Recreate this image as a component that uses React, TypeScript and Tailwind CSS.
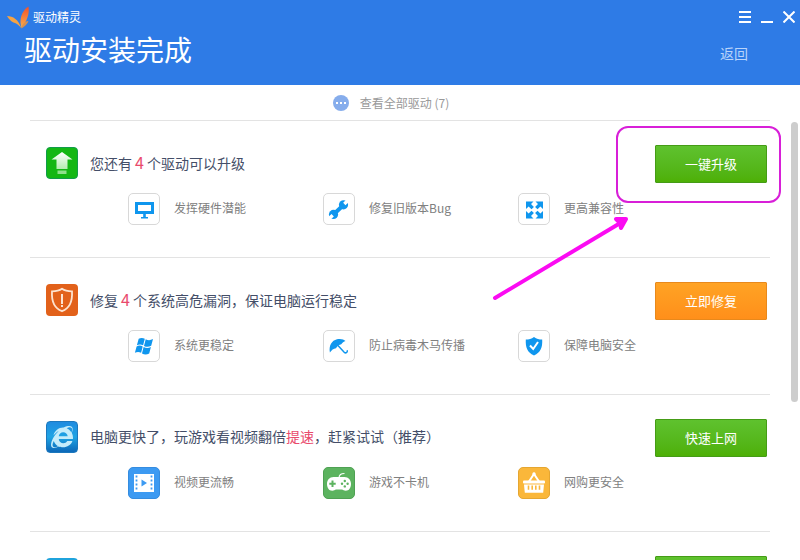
import type { ReactNode } from "react";
import { FaInternetExplorer } from "react-icons/fa";

type Feature = { label: string; icon: ReactNode; tile: string };

type Task = {
  id: string;
  icon: ReactNode;
  title: ReactNode;
  action: string;
  color: "green" | "orange";
  features: Feature[];
};

const OUTLINED = "border border-[#d8d8d8] bg-white text-[#0f96ee]";

const BUTTON_COLORS = {
  green: "border-[#459c16] bg-linear-to-b from-[#5fc22e] to-[#4eb005]",
  orange: "border-[#e8891c] bg-linear-to-b from-[#ffa324] to-[#ff8f1a]",
};

function Glyph({ children }: { children: ReactNode }) {
  return (
    <svg viewBox="0 0 32 32" className="size-8 shrink-0" fill="currentColor" aria-hidden="true">
      {children}
    </svg>
  );
}

function Logo() {
  return (
    <svg viewBox="0 0 24 24" className="size-6" aria-hidden="true">
      <defs>
        <linearGradient id="leaf" x1="0" y1="0" x2="0" y2="1">
          <stop offset="0" stopColor="#f2502a" />
          <stop offset="1" stopColor="#f9b04a" />
        </linearGradient>
      </defs>
      <path d="M21.500 1.500C16.500 4.500 13 11 13.500 18L14.500 23C19.500 17 22.800 9 21.500 1.500Z" fill="url(#leaf)" />
      <path d="M0 11C6 11 11.500 14.500 14.500 23.500C12 20 9.500 18.500 6.500 17.500C4 16.500 2 14 0 11Z" fill="#f6a343" />
      <path d="M14.500 23.500C15 19 17.500 16.500 21.500 16C20.500 19 18 21 14.500 23.500Z" fill="#d99050" />
    </svg>
  );
}

function UpgradeIcon() {
  return (
    <Glyph>
      <defs>
        <linearGradient id="up" x1="0" y1="0" x2="0" y2="1">
          <stop offset="0" stopColor="#fff" />
          <stop offset="1" stopColor="#b4ecb0" />
        </linearGradient>
      </defs>
      <rect x="0.5" y="0.5" width="31" height="31" rx="3.5" fill="#14b714" stroke="#119c4a" />
      <path d="M16 5L26.5 12.5H21.5V22H10.5V12.5H5.5Z" fill="url(#up)" />
      <rect x="11.5" y="23.5" width="9" height="3.5" fill="#8fe08c" />
    </Glyph>
  );
}

function AlertIcon() {
  return (
    <Glyph>
      <rect width="32" height="32" rx="4" fill="#e2611a" />
      <path
        d="M16 4.800C13 7 9.500 7.400 6 7.400C5.400 17 7.500 24 16 27.200C24.500 24 26.600 17 26 7.400C22.500 7.400 19 7 16 4.800Z"
        fill="none"
        stroke="#fde3cf"
        strokeWidth="1.8"
      />
      <rect x="15" y="10" width="2" height="10" fill="#fde3cf" />
      <rect x="15" y="21" width="2" height="2" fill="#fde3cf" />
    </Glyph>
  );
}

function BrowserIcon() {
  return (
    <span className="flex size-8 shrink-0 items-center justify-center rounded-sm border border-[#1c78bd] bg-linear-to-b from-[#1f8be0] via-[#1fa4e4] to-[#0d68b8]">
      <FaInternetExplorer className="size-[22px] text-[#c4ecfb]" aria-hidden="true" />
    </span>
  );
}

const monitor = (
  <Glyph>
    <path fillRule="evenodd" d="M7 9h19v12H7zM10 12v6h13v-6z" />
    <path d="M15.200 21h2.600v3h2.200v1.500h-7V24h2.200z" />
  </Glyph>
);

const wrench = (
  <Glyph>
    <path d="M11 21L20.500 12" stroke="currentColor" strokeWidth="4" />
    <circle cx="20.500" cy="11.800" r="4.600" />
    <circle cx="10.500" cy="21.400" r="4.600" />
    <path d="M21.300 11L27 5.600M9.700 22.200L4 27.600" stroke="#fff" strokeWidth="3.400" />
  </Glyph>
);

const corner = "M8 8.500h7.500l-2.500 2.500 2.900 2.900-2.400 2.400-2.900-2.900L8 16z";
const expand = (
  <Glyph>
    <path d={corner} />
    <path d={corner} transform="matrix(-1 0 0 1 33 0)" />
    <path d={corner} transform="matrix(1 0 0 -1 0 34)" />
    <path d={corner} transform="matrix(-1 0 0 -1 33 34)" />
  </Glyph>
);

const windowsFlag = (
  <Glyph>
    <path d="M10.700 8.800c2-1.300 4.200-1.100 6.100-.1l-1.700 6.600c-2-1.100-4.200-1.100-6.200 0z" />
    <path d="M17.700 9.300c2.400 1.300 4.700 1.200 7.300-.2l-1.800 6.700c-2.400 1.300-4.900 1.400-7.200 .1z" />
    <path d="M8.600 16.400c2-1.100 4.200-1.100 6.100 0l-1.600 6.300c-2-1.100-4.200-1-6.200 0z" />
    <path d="M15.600 17c2.300 1.300 4.800 1.300 7.300 0l-1.700 6.400c-2.400 1.300-4.900 1.300-7.200 0z" />
  </Glyph>
);

const umbrella = (
  <Glyph>
    <path d="M6.900 22.500C5.600 15.500 8.800 10.400 14 9.200C17.500 8.400 20.800 9.200 22.500 11C20.800 11.600 19.200 12.700 18.300 14.300C16.300 14.600 14.200 16 13 18.200C10.600 18.600 8.400 20 6.900 22.500Z" />
    <path d="M14.500 15L21.200 22.200C22.600 23.600 24.800 22.600 24.200 20.200" fill="none" stroke="currentColor" strokeWidth="1.500" />
  </Glyph>
);

const shieldCheck = (
  <Glyph>
    <path d="M16 7C13.500 9 10.800 9.600 7.800 9.600C7.400 17.500 9.300 22.700 16 25.500C22.700 22.700 24.600 17.500 24.200 9.600C21.200 9.600 18.500 9 16 7Z" />
    <path d="M12 15.500L15.200 19L20 12" fill="none" stroke="#fff" strokeWidth="2" />
  </Glyph>
);

const film = (
  <Glyph>
    <rect x="6" y="7" width="20" height="18" fill="#fff" />
    <path d="M8.500 8.500V24M23.500 8.500V24" stroke="#3c9af2" strokeWidth="1.800" strokeDasharray="2 2" />
    <rect x="11" y="9" width="10" height="14" fill="#fff" />
    <path d="M13.500 12.500L19 16L13.500 19.500Z" fill="#3c9af2" />
  </Glyph>
);

const gamepad = (
  <Glyph>
    <path d="M16 11C16 7.500 18 6.500 21.500 6.500" fill="none" stroke="#fff" strokeWidth="1.200" />
    <path
      d="M10.500 10H21.500C25.500 10 28 13 28 16.800C28 21 26 23.800 22.800 23.800C20.800 23.800 20.300 22.500 18.800 22.500H13.200C11.700 22.500 11.200 23.800 9.200 23.800C6 23.800 4 21 4 16.800C4 13 6.500 10 10.500 10Z"
      fill="#fff"
    />
    <path d="M9.500 13.500V20M6.300 16.700H12.700" stroke="#5cb35f" strokeWidth="2" />
    <circle cx="21.800" cy="14" r="1.200" fill="#5cb35f" />
    <circle cx="21.800" cy="19.400" r="1.200" fill="#5cb35f" />
    <circle cx="19" cy="16.700" r="1.200" fill="#5cb35f" />
    <circle cx="24.600" cy="16.700" r="1.200" fill="#5cb35f" />
  </Glyph>
);

const basket = (
  <Glyph>
    <path d="M11 14.500L16 7L21 14.500" fill="none" stroke="#fff" strokeWidth="2" />
    <circle cx="16" cy="7" r="1.700" fill="#fff" />
    <rect x="5" y="13.500" width="22" height="3" rx="1" fill="#fff" />
    <path d="M6 17.500H26L25.200 25.800H6.800Z" fill="#fff" />
    <path d="M10.500 18.500V22.800M14.200 18.500V22.800M17.800 18.500V22.800M21.500 18.500V22.800" stroke="#fab73a" strokeWidth="1.600" />
  </Glyph>
);

const TASKS: Task[] = [
  {
    id: "upgrade",
    icon: <UpgradeIcon />,
    title: (
      <>
        您还有<Mark>4</Mark>个驱动可以升级
      </>
    ),
    action: "一键升级",
    color: "green",
    features: [
      { label: "发挥硬件潜能", icon: monitor, tile: OUTLINED },
      { label: "修复旧版本Bug", icon: wrench, tile: OUTLINED },
      { label: "更高兼容性", icon: expand, tile: OUTLINED },
    ],
  },
  {
    id: "repair",
    icon: <AlertIcon />,
    title: (
      <>
        修复<Mark>4</Mark>个系统高危漏洞，保证电脑运行稳定
      </>
    ),
    action: "立即修复",
    color: "orange",
    features: [
      { label: "系统更稳定", icon: windowsFlag, tile: OUTLINED },
      { label: "防止病毒木马传播", icon: umbrella, tile: OUTLINED },
      { label: "保障电脑安全", icon: shieldCheck, tile: OUTLINED },
    ],
  },
  {
    id: "browser",
    icon: <BrowserIcon />,
    title: (
      <>
        电脑更快了，玩游戏看视频翻倍<span className="text-[#e94a6c]">提速</span>，赶紧试试（推荐）
      </>
    ),
    action: "快速上网",
    color: "green",
    features: [
      { label: "视频更流畅", icon: film, tile: "border border-[#358cdf] bg-[#3c9af2]" },
      { label: "游戏不卡机", icon: gamepad, tile: "border border-[#4fa153] bg-[#5cb35f]" },
      { label: "网购更安全", icon: basket, tile: "border border-[#e5a631] bg-[#fab73a]" },
    ],
  },
  {
    id: "more",
    icon: <span className="size-8 shrink-0 rounded bg-[#1fa3dc]" />,
    title: null,
    action: "",
    color: "green",
    features: [],
  },
];

function Mark({ children }: { children: ReactNode }) {
  return <span className="mx-[3px] text-base leading-5 text-[#e94a6c]">{children}</span>;
}

function TaskRow({ task }: { task: Task }) {
  return (
    <li className="flex min-h-[137px] shrink-0 items-start border-t border-[#e3e3e3] pr-[3px] pl-4">
      <div className="min-w-0 flex-1 pt-[26px]">
        <div className="flex h-8 items-center gap-3">
          {task.icon}
          <h2 className="pb-0.5 text-sm leading-5 whitespace-nowrap text-[#444e68]">{task.title}</h2>
        </div>
        <ul className="mt-[14px] grid grid-cols-[195px_195px_auto] pl-[82px]">
          {task.features.map((f) => (
            <li key={f.label} className="flex items-center gap-[14px]">
              <span className={`flex size-8 shrink-0 items-center justify-center rounded-[5px] ${f.tile}`}>
                {f.icon}
              </span>
              <span className="pb-0.5 text-xs whitespace-nowrap text-[#808080]">{f.label}</span>
            </li>
          ))}
        </ul>
      </div>
      <button
        type="button"
        aria-label={task.action || "更多"}
        className={`mt-6 h-[38px] w-28 shrink-0 rounded-[1px] border text-[13px] text-white ${BUTTON_COLORS[task.color]}`}
      >
        {task.action}
      </button>
    </li>
  );
}

// Hand-drawn frame round the first action, with an arrow leading to it
function Callout() {
  return (
    <svg
      className="pointer-events-none absolute top-0 -right-[15px] z-10 h-[182px] w-[295px]"
      viewBox="0 0 295 182"
      fill="none"
      aria-hidden="true"
    >
      <rect x="127" y="7" width="163" height="75" rx="11" stroke="#d81fd8" strokeWidth="2" />
      <path d="M5 178L132 102" stroke="#fb0bf2" strokeWidth="4" strokeLinecap="round" />
      <path
        d="M126 99L136 99L131 108L130 103Z"
        fill="#fb0bf2"
        stroke="#fb0bf2"
        strokeWidth="4"
        strokeLinejoin="round"
      />
    </svg>
  );
}

export default function App() {
  return (
    <div className="flex h-screen flex-col overflow-hidden bg-white font-['Noto_Sans_CJK_SC',sans-serif]">
      <header className="bg-[#2e7be6] pb-5 text-white">
        <div className="flex h-[33px] items-center justify-between pr-[5px] pl-[7px]">
          <div className="flex items-center gap-0.5 text-xs">
            <Logo />
            <span>驱动精灵</span>
          </div>
          <div className="flex gap-[10px]">
            <button type="button" aria-label="菜单">
              <svg viewBox="0 0 12 12" className="size-3" fill="currentColor">
                <path d="M0 0h12v2H0zM0 5h12v2H0zM0 10h12v2H0z" />
              </svg>
            </button>
            <button type="button" aria-label="最小化">
              <svg viewBox="0 0 12 12" className="size-3" fill="currentColor">
                <path d="M0 10h12v2H0z" />
              </svg>
            </button>
            <button type="button" aria-label="关闭">
              <svg viewBox="0 0 12 12" className="size-3" stroke="currentColor" strokeWidth="2">
                <path d="M.5 .5L11.500 11.500M11.500 .5L.5 11.500" />
              </svg>
            </button>
          </div>
        </div>
        <div className="flex h-8 items-center justify-between pr-[52px] pl-6">
          <h1 className="text-[28px] leading-8">驱动安装完成</h1>
          <button type="button" className="mt-2 text-sm text-[#b9d4fa]">
            返回
          </button>
        </div>
      </header>

      <div className="flex h-[35px] shrink-0 items-center justify-center pr-[18px]">
        <button type="button" className="flex items-center gap-[11px] text-xs text-[#999]">
          <svg viewBox="0 0 16 16" className="size-4" aria-hidden="true">
            <circle cx="8" cy="8" r="8" fill="#86adec" />
            <path d="M3 7h2v2H3zM7 7h2v2H7zM11 7h2v2h-2z" fill="#fff" />
          </svg>
          查看全部驱动 (7)
        </button>
      </div>

      <main className="flex min-h-0 flex-1">
        <div className="relative ml-[30px] flex-1">
          <ul className="flex flex-col">
            {TASKS.map((task) => (
              <TaskRow key={task.id} task={task} />
            ))}
          </ul>
          <Callout />
        </div>
        <div className="flex w-[30px] justify-end pt-0.5 pr-0.5">
          <div className="h-[64%] w-[7px] rounded-full bg-[#cdcdcd]" />
        </div>
      </main>
    </div>
  );
}
